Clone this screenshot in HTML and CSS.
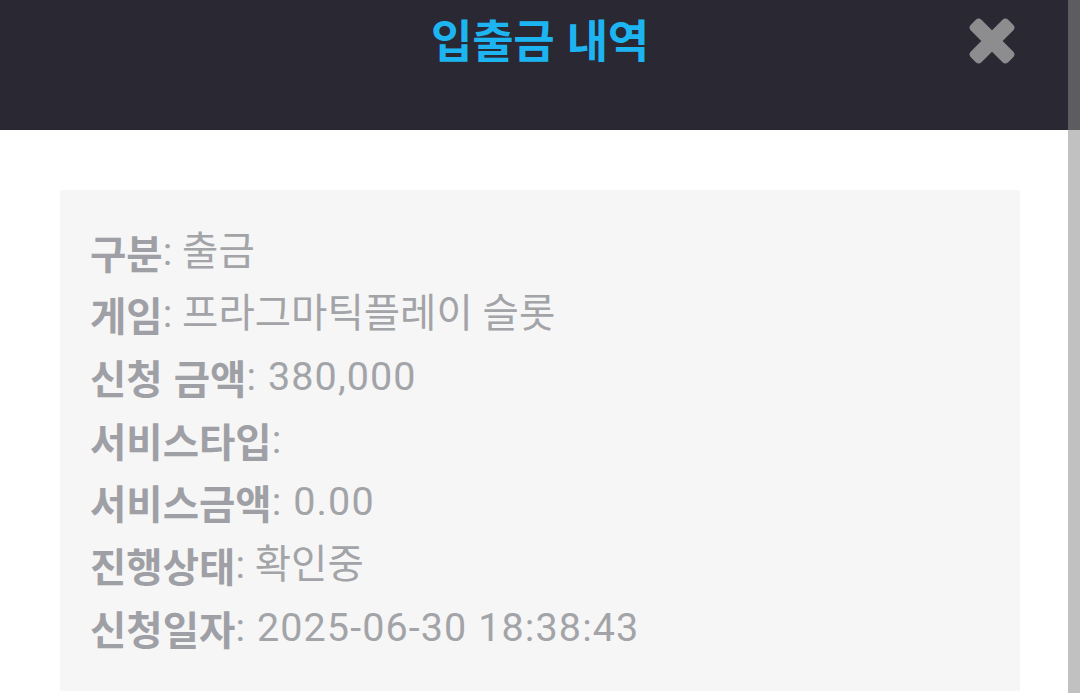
FILE: index.html
```html
<!DOCTYPE html>
<html lang="ko">
<head>
<meta charset="utf-8">
<title>입출금 내역</title>
<link rel="stylesheet" href="styles.css">
</head>
<body>
<div class="page">
  <header class="header">
    <h1 class="title">입출금 내역</h1>
    <button class="close" aria-label="닫기">
      <svg width="48" height="48" viewBox="0 0 48 48">
        <rect x="-2.4" y="16.5" width="52.8" height="15" rx="4" transform="rotate(45 24 24)" fill="#8d8d8f"/>
        <rect x="-2.4" y="16.5" width="52.8" height="15" rx="4" transform="rotate(-45 24 24)" fill="#8d8d8f"/>
      </svg>
    </button>
  </header>
  <main class="content">
    <div class="card">
      <div class="row"><span class="label">구분</span><span class="value">: 출금</span></div>
      <div class="row"><span class="label">게임</span><span class="value">: 프라그마틱플레이 슬롯</span></div>
      <div class="row"><span class="label">신청 금액</span><span class="value num">: 380,000</span></div>
      <div class="row"><span class="label">서비스타입</span><span class="value">:</span></div>
      <div class="row"><span class="label">서비스금액</span><span class="value num">: 0.00</span></div>
      <div class="row"><span class="label">진행상태</span><span class="value">: 확인중</span></div>
      <div class="row"><span class="label">신청일자</span><span class="value num">: 2025-06-30 18:38:43</span></div>
    </div>
  </main>
  <div class="scrollbar"></div>
</div>
</body>
</html>
```

FILE: styles.css
```css
* { box-sizing: border-box; }
html, body {
  margin: 0;
  padding: 0;
  background: #ffffff;
  overflow: hidden;
}
body {
  font-family: Roboto, "Noto Sans CJK KR", sans-serif;
}
.page {
  position: relative;
  width: 1080px;
  height: 693px;
}
.header {
  position: relative;
  height: 130px;
  background: #2a2933;
  display: flex;
  justify-content: center;
}
.title {
  margin: 0;
  font-family: "Noto Sans CJK KR", sans-serif;
  font-weight: 700;
  font-size: 45px;
  line-height: 78px;
  color: #1db4f2;
  letter-spacing: -0.3px;
}
.close {
  position: absolute;
  top: 17px;
  left: 968px;
  width: 48px;
  height: 48px;
  padding: 0;
  border: 0;
  background: transparent;
  display: block;
}
.close svg { display: block; }
.content {
  padding: 60px 60px 0 60px;
}
.card {
  width: 960px;
  background: #f6f6f6;
  padding: 30px 30px 32px 30px;
  border-radius: 2px;
}
.row {
  display: flex;
  align-items: center;
  height: 62.7px;
  font-size: 39.5px;
  line-height: 1;
  color: #a3a4a8;
  white-space: nowrap;
}
.label {
  font-family: "Noto Sans CJK KR", sans-serif;
  font-weight: 700;
  color: #9fa0a5;
}
.value {
  font-family: Roboto, "Noto Sans CJK KR", sans-serif;
  font-weight: 400;
  white-space: pre;
}
.value.num {
  letter-spacing: 1.1px;
}
.scrollbar {
  position: absolute;
  top: 0;
  right: 0;
  width: 12px;
  height: 693px;
  background: rgba(137, 137, 137, 0.53);
}
```
